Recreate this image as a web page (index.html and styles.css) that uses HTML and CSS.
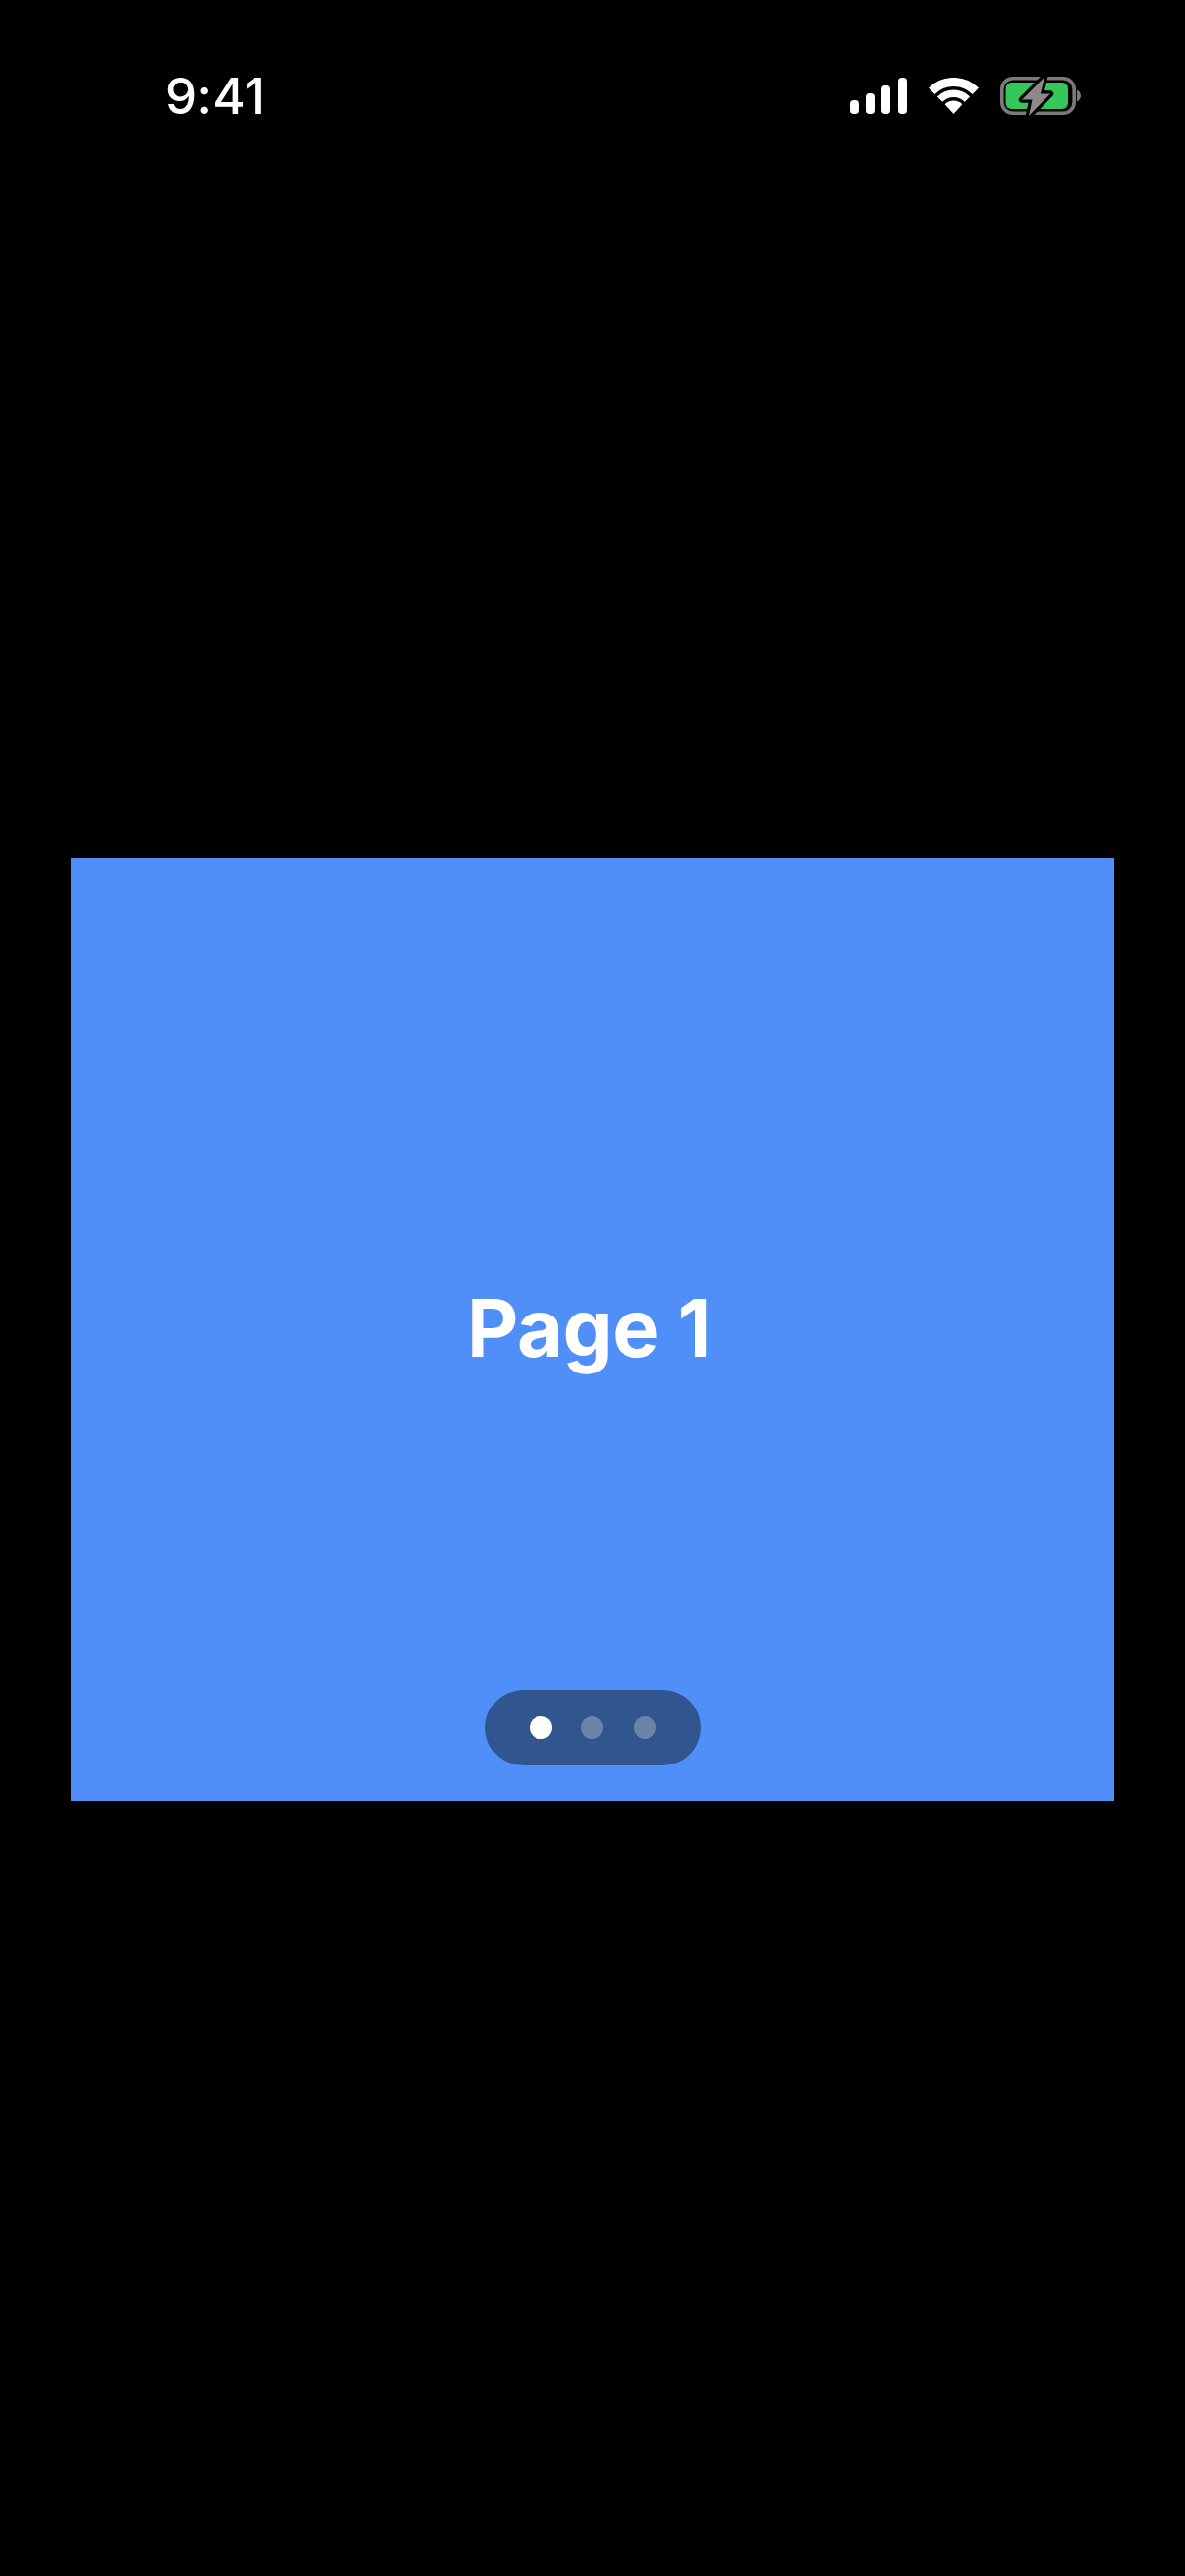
FILE: index.html
```html
<!DOCTYPE html>
<html lang="en">
<head>
<meta charset="utf-8">
<title>Page 1</title>
<link rel="stylesheet" href="styles.css">
</head>
<body>
<div class="screen">
  <header class="status-bar">
    <span class="time">9:41</span>
    <div class="status-icons">
      <svg class="signal" viewBox="0 0 58 37" aria-hidden="true">
        <rect x="0" y="23" width="9" height="14" rx="3.8"/>
        <rect x="16" y="16" width="9" height="21" rx="3.8"/>
        <rect x="32" y="8" width="9" height="29" rx="3.8"/>
        <rect x="49" y="0" width="9" height="37" rx="3.8"/>
      </svg>
      <svg class="wifi" viewBox="0 0 51 37" aria-hidden="true">
        <path class="wifi-arc outer" d="M3.2 13.700A31.500 31.500 0 0 1 47.800 13.700"/>
        <path class="wifi-arc inner" d="M11.540 22.040A19.750 19.750 0 0 1 39.460 22.040"/>
        <path class="wifi-dot" d="M25.500 37L16.660 27.160A12.500 12.500 0 0 1 34.340 27.160Z"/>
      </svg>
      <svg class="battery" viewBox="0 0 84 42" aria-hidden="true">
        <rect class="bat-shell" x="1.8" y="2.8" width="73.4" height="35.4" rx="11"/>
        <rect class="bat-fill" x="5.500" y="7" width="63.500" height="27" rx="6"/>
        <path class="bat-cap" d="M78 14.500C80.500 15.500 82 18 82 20.500S80.500 25.500 78 26.500Z"/>
        <path class="bat-bolt" d="M45 1.500L22 24.500H32.500L29 41L51 18.500H41Z"/>
      </svg>
    </div>
  </header>
  <main class="panel">
    <h1 class="title">Page 1</h1>
    <div class="pager">
      <span class="dot active"></span>
      <span class="dot"></span>
      <span class="dot"></span>
    </div>
  </main>
</div>
</body>
</html>
```

FILE: styles.css
```css
* {
  box-sizing: border-box;
}

html,
body {
  margin: 0;
  padding: 0;
  background: #000;
}

.screen {
  width: 1206px;
  height: 2622px;
  padding-top: 78px;
  overflow: hidden;
  background: #000;
  font-family: Inter, "Liberation Sans", sans-serif;
}

.status-bar {
  display: flex;
  align-items: center;
  justify-content: space-between;
  height: 39px;
  padding: 0 104px 0 168px;
}

.time {
  color: #fff;
  font-size: 51px;
  font-weight: 500;
  line-height: 39px;
  letter-spacing: 0.3px;
}

.status-icons {
  display: flex;
  align-items: center;
}

.signal {
  width: 58px;
  height: 37px;
  fill: #fff;
}

.wifi {
  width: 51px;
  height: 37px;
  margin-left: 22px;
}

.wifi-arc {
  fill: none;
  stroke: #fff;
}

.wifi-arc.outer {
  stroke-width: 9;
}

.wifi-arc.inner {
  stroke-width: 7.5;
}

.wifi-dot {
  fill: #fff;
}

.battery {
  width: 84px;
  height: 42px;
  margin-left: 22px;
}

.bat-shell {
  fill: none;
  stroke: #7b7b7b;
  stroke-width: 3.6;
}

.bat-fill {
  fill: #34c759;
}

.bat-cap {
  fill: #7b7b7b;
}

.bat-bolt {
  fill: #8a8a8a;
  stroke: #000;
  stroke-width: 6.5;
  stroke-linejoin: round;
  paint-order: stroke;
}

.panel {
  position: relative;
  display: flex;
  align-items: center;
  justify-content: center;
  width: 1062px;
  height: 960px;
  margin: 756px 0 0 72px;
  background: #4f8ff7;
}

.title {
  margin: 0 7px 2px 0;
  color: #fff;
  font-size: 81px;
  font-weight: 700;
  line-height: 1;
  letter-spacing: -0.5px;
}

.pager {
  position: absolute;
  left: 50%;
  bottom: 36px;
  display: flex;
  align-items: center;
  width: 219px;
  height: 77px;
  margin-left: -109px;
  padding-left: 45px;
  border-radius: 38.5px;
  background: #31568f;
}

.dot {
  width: 23px;
  height: 23px;
  border-radius: 50%;
  background: #6a83a8;
}

.dot + .dot {
  margin-left: 29px;
}

.dot + .dot + .dot {
  margin-left: 31px;
}

.dot.active {
  background: #fff;
}
```
